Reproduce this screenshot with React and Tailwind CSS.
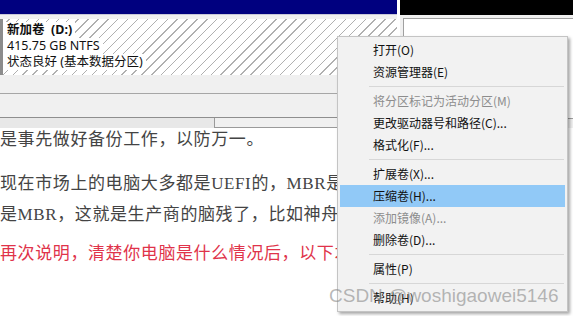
import React from "react";

const items = [
  { t: "打开(O)" },
  { t: "资源管理器(E)" },
  { sep: true },
  { t: "将分区标记为活动分区(M)", dis: true },
  { t: "更改驱动器号和路径(C)..." },
  { t: "格式化(F)..." },
  { sep: true },
  { t: "扩展卷(X)..." },
  { t: "压缩卷(H)...", hi: true },
  { t: "添加镜像(A)...", dis: true },
  { t: "删除卷(D)..." },
  { sep: true },
  { t: "属性(P)" },
  { sep: true },
  { t: "帮助(H)" },
];

export default function App() {
  return (
    <div className="relative w-[573px] h-[316px] overflow-hidden bg-white">
      {/* top disk management area */}
      <div className="flex h-[128px] bg-[#f0f0f0]">
        <div className="w-[397px] flex flex-col">
          <div className="h-[15px] bg-[#00007f] border-b border-[#c8c8d8]" />
          <div className="h-[4px]" />
          <div className="h-[56px] border-l-[3px] border-[#8c8c8c] bg-[repeating-linear-gradient(135deg,#ffffff_0px,#ffffff_4px,#b0b0b0_4px,#b0b0b0_5px,#ffffff_5px,#ffffff_7px)] pt-[3px] font-['Noto_Sans','Noto_Sans_CJK_SC',sans-serif] text-[12.5px] leading-[16px] text-[#111]">
            <div>
              <span className="inline-block bg-white pl-[4px] pr-[3px] font-bold">新加卷&nbsp;&nbsp;(D:)</span>
            </div>
            <div>
              <span className="inline-block bg-white pl-[4px] pr-[3px]">415.75 GB NTFS</span>
            </div>
            <div>
              <span className="inline-block bg-white pl-[4px] pr-[3px]">状态良好 (基本数据分区)</span>
            </div>
          </div>
          <div className="h-[18px] bg-[#f0f0f0]" />
          <div className="h-px bg-[#a6a6a6]" />
          <div className="h-[23px] bg-[#f0f0f0]" />
          <div className="h-px bg-[#8e8e8e]" />
          <div className="flex h-[10px]">
            <div className="w-[214px] bg-[#e8e8e8]" />
            <div className="flex-1 bg-[#f0f0f0] border-l border-b border-[#9a9a9a]" />
          </div>
        </div>
        <div className="w-[3px] bg-white" />
        <div className="flex-1 flex flex-col">
          <div className="h-[15px] bg-black" />
          <div className="h-[3px]" />
          <div className="ml-[3px] h-[101px] bg-white border-l border-t border-b border-[#a0a0a0]" />
        </div>
      </div>

      {/* article text */}
      <div className="font-['Liberation_Serif','Noto_Sans_CJK_SC',serif] text-[17px] tracking-[0.6px] text-[#444444] whitespace-nowrap">
        <p className="leading-[24px]">是事先做好备份工作，以防万一。</p>
        <p className="mt-[16px] leading-[31px]">
          现在市场上的电脑大多都是UEFI的，MBR是很少见了，
          <br />
          是MBR，这就是生产商的脑残了，比如神舟的一些型号
        </p>
        <p className="mt-[8px] leading-[31px] text-[#e0334a]">
          再次说明，清楚你电脑是什么情况后，以下才是正文。
        </p>
      </div>

      {/* context menu */}
      <div className="absolute left-[337px] top-[36px] w-[231px] bg-[#f2f2f2] border border-[#c4c4c4] p-[2px] shadow-[2px_2px_3px_rgba(0,0,0,0.35)] font-['Noto_Sans_CJK_SC','Noto_Sans',sans-serif] text-[12px]">
        {items.map((it, i) =>
          it.sep ? (
            <div key={i} className="h-[7px] flex items-center pl-[29px] pr-[1px]">
              <div className="h-px w-full bg-[#d7d7d7]" />
            </div>
          ) : (
            <div
              key={i}
              className={
                "h-[22px] flex items-center pl-[33px] " +
                (it.hi ? "bg-[#91c9f7] " : "") +
                (it.dis ? "text-[#8d8d8d]" : "text-[#111]")
              }
            >
              {it.t}
            </div>
          )
        )}
      </div>

      {/* watermark */}
      <div className="absolute left-[329px] top-[285px] font-['Liberation_Sans',Arial,sans-serif] text-[19px] leading-[22px] text-[#888888]/60 whitespace-nowrap pointer-events-none">
        CSDN @woshigaowei5146
      </div>
    </div>
  );
}
